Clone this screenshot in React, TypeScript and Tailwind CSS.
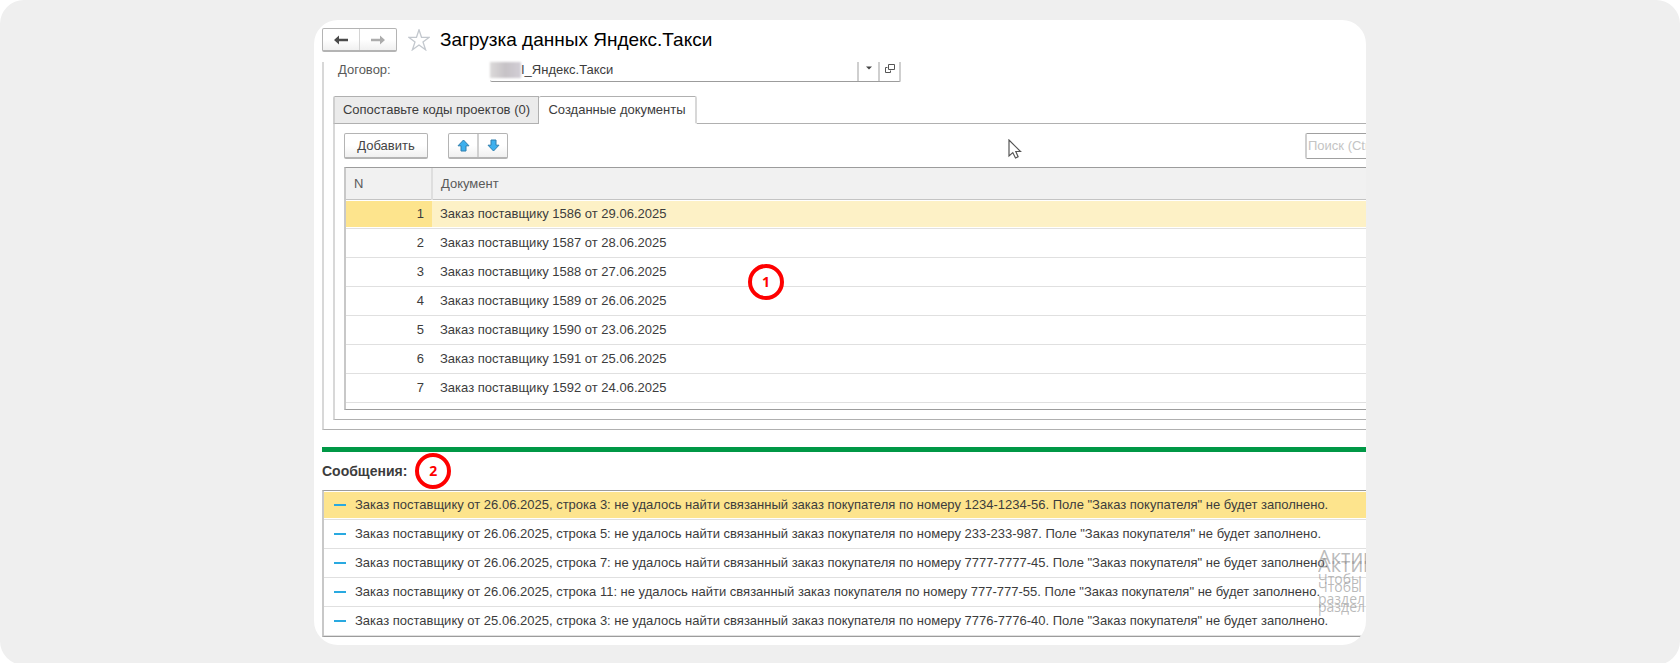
import { ReactNode, useState } from 'react';

const documents = [
  'Заказ поставщику 1586 от 29.06.2025',
  'Заказ поставщику 1587 от 28.06.2025',
  'Заказ поставщику 1588 от 27.06.2025',
  'Заказ поставщику 1589 от 26.06.2025',
  'Заказ поставщику 1590 от 23.06.2025',
  'Заказ поставщику 1591 от 25.06.2025',
  'Заказ поставщику 1592 от 24.06.2025',
];

const messages = [
  { date: '26.06.2025', row: 3, order: '1234-1234-56' },
  { date: '26.06.2025', row: 5, order: '233-233-987' },
  { date: '26.06.2025', row: 7, order: '7777-7777-45' },
  { date: '26.06.2025', row: 11, order: '777-777-55' },
  { date: '25.06.2025', row: 3, order: '7776-7776-40' },
];

const HistoryArrow = ({ flip }: { flip?: boolean }) => (
  <svg width="14" height="10" viewBox="0 0 14 10" className={flip ? 'rotate-180' : ''}>
    <path d="M0 5 5 0.500V3.800H14V6.200H5V9.500Z" fill="currentColor" />
  </svg>
);

const MoveArrow = ({ flip }: { flip?: boolean }) => (
  <svg width="13" height="13" viewBox="0 0 13 13" className={flip ? 'rotate-180' : ''}>
    <path
      d="M6.500 1 12 6.800H9V12H4V6.800H1Z"
      fill="#3db0ee"
      stroke="#2f7fae"
      strokeWidth="1"
      strokeLinejoin="round"
    />
  </svg>
);

const Marker = ({ children }: { children: ReactNode }) => (
  <span className="flex h-9 w-9 items-center justify-center rounded-full border-4 border-[#fe0000] bg-white font-['Open_Sans',sans-serif] text-sm font-bold text-[#fe0000]">
    {children}
  </span>
);

const WatermarkLines = ({ className }: { className: string }) => (
  <div className={className}>
    <div className="text-xl leading-6">Актив</div>
    <div className="text-sm leading-5">Чтобы</div>
    <div className="text-sm leading-5">раздел</div>
  </div>
);

const buttonStyle =
  'flex items-center justify-center rounded-xs border border-b-2 border-[#b4b4b4] bg-linear-to-b from-white from-50% to-[#f0f0f0]';

const Header = () => (
  <header className="flex h-[42px] items-center pb-[2px] pl-2">
    <div className={`${buttonStyle} h-6 w-[75px]`}>
      <button aria-label="Назад" className="flex h-full flex-1 items-center justify-center border-r border-[#d4d4d4] text-[#4a4a4a]">
        <HistoryArrow />
      </button>
      <button aria-label="Вперед" className="flex h-full flex-1 items-center justify-center text-[#acacac]">
        <HistoryArrow flip />
      </button>
    </div>
    <button aria-label="В избранное" className="ml-[11px]">
      <svg width="22" height="22" viewBox="0 0 22 22">
        <path
          d="M11 0.800 13.500 8.300H21.300L15 12.900 17.600 20.800 11 16 4.400 20.800 7 12.900 0.700 8.300H8.500Z"
          fill="#fff"
          stroke="#c3c8ce"
          strokeWidth="1.300"
        />
      </svg>
    </button>
    <h1 className="ml-[10px] text-[19px] whitespace-nowrap text-black">Загрузка данных Яндекс.Такси</h1>
  </header>
);

const ContractField = () => (
  <div className="flex h-5 items-stretch pl-[14px]">
    <label htmlFor="contract" className="w-[152px] leading-4 text-[#5a5a5a]">
      Договор:
    </label>
    <div className="flex w-[411px] rounded-b-xs border-b border-[#9c9c9c]">
      <div className="h-4 w-[31px] bg-linear-to-r from-[#dcdada] via-[#c6c2c6] to-[#d2ced6] blur-[1px]" />
      <input
        id="contract"
        defaultValue="I_Яндекс.Такси"
        className="h-4 min-w-0 flex-1 leading-4 outline-none"
      />
      <button aria-label="Выбрать" className="flex w-[21px] justify-center border-l-2 border-[#cfcfcf] pt-1">
        <svg width="6" height="4" viewBox="0 0 6 4">
          <path d="M0 0.500h6L3 3.500Z" fill="#444" />
        </svg>
      </button>
      <button aria-label="Открыть" className="flex w-[23px] justify-center border-x-2 border-[#cfcfcf] pt-[2px]">
        <svg width="10" height="10" viewBox="0 0 10 10" fill="none" stroke="#555" strokeWidth="1">
          <path d="M3.500 0.500h6v5h-6zM2.500 3.500h-2v5h5v-2" />
        </svg>
      </button>
    </div>
  </div>
);

const Toolbar = () => (
  <div className="flex h-[43px] items-center pl-[9px]">
    <button className={`${buttonStyle} h-[26px] w-[84px] pt-px text-[#444]`}>Добавить</button>
    <div className={`${buttonStyle} ml-5 h-[26px] w-[60px]`}>
      <button aria-label="Вверх" className="flex h-full flex-1 items-center justify-center border-r-2 border-[#d0d0d0]">
        <MoveArrow />
      </button>
      <button aria-label="Вниз" className="flex h-full flex-1 items-center justify-center">
        <MoveArrow flip />
      </button>
    </div>
    <div className="ml-auto w-[61px] overflow-hidden">
      <input
        type="search"
        aria-label="Поиск"
        placeholder="Поиск (Ctrl+F)"
        className="h-[26px] w-[200px] rounded-xs border border-l-2 border-[#a0a0a0] border-l-[#cfcfcf] px-px placeholder:text-[#c4c4c4]"
      />
    </div>
  </div>
);

// white hairlines above and below a highlighted row
const selectedEdge = 'shadow-[inset_0_1px_0_#fff,inset_0_-1px_0_#fff]';

const DocumentTable = () => {
  const [selected, setSelected] = useState(0);

  return (
    <div className="relative ml-[9px] h-[243px] border-y border-l-2 border-[#9c9c9c] border-l-[#c8c8c8]">
      <table className="w-full table-fixed border-collapse">
        <colgroup>
          <col className="w-[86px]" />
          <col />
        </colgroup>
        <thead>
          <tr className="h-[31px] border-b border-[#c4c4c4] bg-[#f1f1f1] text-left text-[#5a5a5a]">
            <th className="border-r-2 border-[#dedede] pl-2 font-normal">N</th>
            <th className="pl-2 font-normal">Документ</th>
          </tr>
        </thead>
        <tbody>
          {documents.map((name, index) => (
            <tr
              key={name}
              onClick={() => setSelected(index)}
              className={`h-[29px] border-b border-[#e0e0e0] ${index === selected ? 'bg-[#fdf1c6]' : ''}`}
            >
              <td className={`pr-2 text-right ${index === selected ? `bg-[#fde48d] ${selectedEdge}` : ''}`}>
                {index + 1}
              </td>
              <td className={`pl-2 ${index === selected ? selectedEdge : ''}`}>{name}</td>
            </tr>
          ))}
        </tbody>
      </table>
      <div className="absolute top-24 left-[402px]">
        <Marker>1</Marker>
      </div>
    </div>
  );
};

const Messages = () => (
  <section>
    <div className="flex h-[38px] items-center">
      <h2 className="mr-2 text-sm font-bold">Сообщения:</h2>
      <Marker>2</Marker>
    </div>
    <ul className="border-y border-l-2 border-[#9c9c9c] border-l-[#c8c8c8]">
      {messages.map(({ date, row, order }, index) => (
        <li
          key={order}
          className={`flex h-[29px] items-center border-b border-[#e0e0e0] pl-[10px] whitespace-nowrap ${index === 0 ? `bg-[#fde48d] ${selectedEdge}` : ''}`}
        >
          <span className="mr-[9px] h-[2px] w-3 bg-[#29a9e0]" />
          Заказ поставщику от {date}, строка {row}: не удалось найти связанный заказ покупателя по номеру {order}. Поле
          "Заказ покупателя" не будет заполнено.
        </li>
      ))}
    </ul>
  </section>
);

const App = () => {
  return (
    <div className="rounded-3xl bg-[#efefef] px-[314px] py-5 font-['Liberation_Sans',Arial,sans-serif] text-[13px] text-[#3c3c3c]">
      <main className="relative overflow-hidden rounded-3xl bg-white pb-2">
        <Header />
        <div className="ml-2 border-b border-l-2 border-[#b0b0b0] border-l-[#d8d8d8] pb-[9px]">
          <ContractField />
          <div className="mt-[14px] ml-[9px]">
            <div role="tablist" className="flex h-7">
              <button
                role="tab"
                aria-selected="false"
                className="w-[206px] rounded-tl-xs border border-l-2 border-[#b0b0b0] border-l-[#cfcfcf] bg-[#ebebeb] whitespace-nowrap"
              >
                Сопоставьте коды проектов (0)
              </button>
              <button
                role="tab"
                aria-selected="true"
                className="w-[158px] rounded-t-xs border-t border-r-2 border-b border-[#b0b0b0] border-r-[#d8d8d8] border-b-white whitespace-nowrap"
              >
                Созданные документы
              </button>
              <div className="flex-1 border-b border-[#b0b0b0]" />
            </div>
            <div className="border-b border-l-2 border-[#b0b0b0] border-l-[#d8d8d8] pb-[9px]">
              <Toolbar />
              <DocumentTable />
            </div>
          </div>
        </div>
        <div className="mt-[17px] ml-2">
          <div className="h-[5px] bg-[#009846]" />
          <Messages />
        </div>

        <svg className="absolute top-[119px] left-[694px]" width="14" height="21" viewBox="0 0 14 21">
          <path
            d="M1 1v16l3.800-3.400L7.500 19l2.600-1.200L7.800 12.500H12.500Z"
            fill="#fff"
            stroke="#555"
            strokeWidth="1.200"
          />
        </svg>
        <div className="pointer-events-none absolute right-0 bottom-6 h-[76px] w-12 overflow-hidden font-['Open_Sans',sans-serif] text-[#8c8c8c]/60">
          <WatermarkLines className="absolute top-0 left-0" />
          <WatermarkLines className="absolute top-2 left-0" />
        </div>
      </main>
    </div>
  );
};

export default App;
